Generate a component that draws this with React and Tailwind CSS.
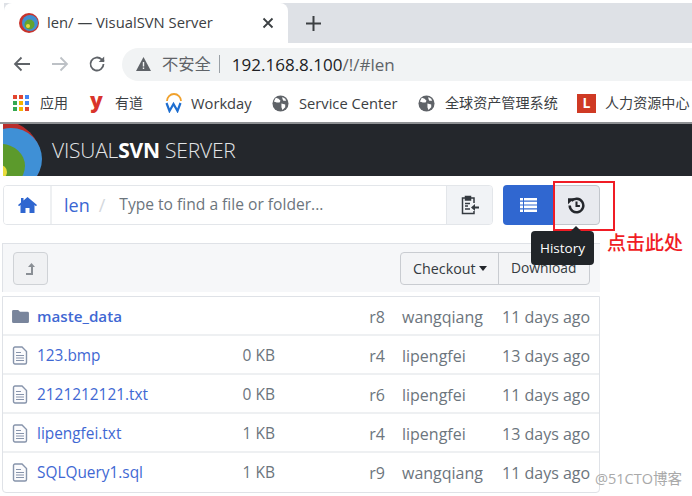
import React from "react";

const sans = { fontFamily: '"Open Sans","Noto Sans CJK SC",sans-serif' };

function Bm({ icon, label, className = "", gap = "gap-[10px]", text = "text-[14.7px]" }) {
  return (
    <div className={"flex items-center " + gap + " " + className}>
      {icon}
      <span className={text + " leading-none text-[#3c4043] whitespace-nowrap"}>{label}</span>
    </div>
  );
}

const Globe = () => (
  <svg width="17" height="17" viewBox="0 0 18 18" className="shrink-0">
    <circle cx="9" cy="9" r="8.5" fill="#5f6368" />
    <path d="M4 3l3 1 2 2-1 2-3 0-3-1zM10 9l4 1 0 3-3 3-1-3zM11 2l3 2 1 2-3 0-1-2z" fill="#fff" />
  </svg>
);

const FileIcon = () => (
  <svg width="16" height="19" viewBox="0 0 16 19" className="shrink-0" fill="none" stroke="#8794ab" strokeWidth="1.4">
    <path d="M1.5 2.5a1.5 1.5 0 0 1 1.5-1.5h7l4.5 4.5v11a1.5 1.5 0 0 1-1.5 1.5H3a1.5 1.5 0 0 1-1.5-1.5z" fill="#fbfbfd" />
    <path d="M4 6.5h5M4 9.5h8M4 12h8M4 14.5h8" strokeWidth="1.1" />
  </svg>
);

const FolderIcon = () => (
  <svg width="17" height="15" viewBox="0 0 18 16" className="shrink-0">
    <path d="M0 2.5A1.5 1.5 0 0 1 1.5 1h5l2 2h8A1.5 1.5 0 0 1 18 4.5v9a1.5 1.5 0 0 1-1.5 1.5h-15A1.5 1.5 0 0 1 0 13.500z" fill="#79859c" />
  </svg>
);

const rows = [
  ["folder", "maste_data", "", "r8", "wangqiang", "11 days ago"],
  ["file", "123.bmp", "0 KB", "r4", "lipengfei", "13 days ago"],
  ["file", "2121212121.txt", "0 KB", "r6", "lipengfei", "11 days ago"],
  ["file", "lipengfei.txt", "1 KB", "r4", "lipengfei", "13 days ago"],
  ["file", "SQLQuery1.sql", "1 KB", "r9", "wangqiang", "11 days ago"],
];

export default function App() {
  return (
    <div className="relative w-[692px] h-[496px] overflow-hidden bg-white" style={sans}>
      {/* tab strip */}
      <div className="mt-[3px] h-[40px] flex bg-[#dee1e6]">
        <div className="w-[4px] bg-white" />
        <div className="w-[284px] bg-white rounded-t-[8px] flex items-center pl-[15px] pr-[14px]">
          <svg width="20" height="20" viewBox="0 0 20 20" className="shrink-0">
            <circle cx="10" cy="10" r="10" fill="#c8332b" />
            <circle cx="11" cy="10" r="8" fill="#3f8fd0" />
            <circle cx="10.500" cy="11.500" r="5" fill="#63a22f" />
            <circle cx="9" cy="13" r="2" fill="#e8d93c" />
          </svg>
          <span className="ml-[8px] pb-[2px] text-[14.800px] text-[#3c4043] leading-none whitespace-nowrap">len/ — VisualSVN Server</span>
          <svg width="12" height="12" viewBox="0 0 12 12" className="ml-auto" stroke="#3c4043" strokeWidth="1.8">
            <path d="M1.500 1.500l9 9M10.500 1.500l-9 9" />
          </svg>
        </div>
        <div className="w-[50px] flex items-center justify-center">
          <svg width="15" height="15" viewBox="0 0 15 15" stroke="#3c4043" strokeWidth="2"><path d="M7.500 0v15M0 7.500h15" /></svg>
        </div>
      </div>

      {/* address bar */}
      <div className="h-[43px] flex items-center pl-[13px] pb-[1px]">
        <svg width="18" height="16" viewBox="0 0 18 16" fill="none" stroke="#5f6368" strokeWidth="1.8"><path d="M17 8H2M8.500 1.500L2 8l6.500 6.500" /></svg>
        <svg width="18" height="16" viewBox="0 0 18 16" fill="none" stroke="#bdc1c6" strokeWidth="1.8" className="ml-[20px]"><path d="M1 8h15M9.500 1.500L16 8l-6.500 6.500" /></svg>
        <svg width="18" height="18" viewBox="0 0 18 18" fill="none" stroke="#5f6368" strokeWidth="1.8" className="ml-[19px]">
          <path d="M15.500 9a6.500 6.500 0 1 1-1.900-4.600L16 6.500" />
          <path d="M16.200 1.500v5.500h-5.500" fill="#5f6368" stroke="none" />
        </svg>
        <div className="ml-[16px] flex-1 h-[33px] rounded-l-[17px] bg-[#f1f3f4] flex items-center pl-[14px]">
          <svg width="15" height="14" viewBox="0 0 15 14"><path d="M7.500 0L15 14H0z" fill="#5f6368" /><path d="M6.800 5h1.400v4.500H6.800zM6.800 10.500h1.400V12H6.800z" fill="#f1f3f4" /></svg>
          <span className="ml-[11px] text-[16.300px] leading-none text-[#5f6368]">不安全</span>
          <span className="ml-[8px] w-px h-[18px] bg-[#9aa0a6]" />
          <span className="ml-[12px] text-[17px] leading-none text-[#202124] whitespace-nowrap">
            192.168.8.100<span className="text-[#5f6368]">/!/#len</span>
          </span>
        </div>
      </div>

      {/* bookmarks */}
      <div className="h-[38px] flex items-center pl-[13px] pb-[2px] border-b-[2px] border-[#8f9194]">
        <Bm
          className="w-[77px]"
          gap="gap-[11px]"
          text="text-[14px]"
          label="应用"
          icon={
            <div className="grid grid-cols-3 gap-[2px] w-[16px] shrink-0">
              {["#e2452f", "#e2452f", "#4285f4", "#34a853", "#f4b400", "#4285f4", "#34a853", "#f4b400", "#e2452f"].map((c, i) => (
                <span key={i} className="w-[4px] h-[4px]" style={{ backgroundColor: c }} />
              ))}
            </div>
          }
        />
        <Bm
          className="w-[75px]"
          gap="gap-[12px]"
          text="text-[14px]"
          label="有道"
          icon={<span className="text-[21px] font-extrabold leading-none text-[#d9342b] w-[13px] -mt-[6px]">y</span>}
        />
        <Bm
          className="w-[107px]"
          label="Workday"
          gap="gap-[8px]"
          icon={
            <svg width="18" height="20" viewBox="0 0 18 20" fill="none" className="shrink-0">
              <path d="M2 8a7 7 0 0 1 14 0" stroke="#f0a12c" strokeWidth="1.800" />
              <path d="M1.500 10l3 8 4-7 4 7 3-8" stroke="#1e6ed0" strokeWidth="2.200" />
            </svg>
          }
        />
        <Bm className="w-[146px]" label="Service Center" icon={<Globe />} />
        <Bm className="w-[159px]" label="全球资产管理系统" text="text-[14.100px]" icon={<Globe />} />
        <Bm
          label="人力资源中心"
          gap="gap-[9px]"
          text="text-[14.100px]"
          icon={
            <span className="w-[19px] h-[19px] shrink-0 bg-[#cf3a24] text-white text-[14px] font-bold leading-none flex items-center justify-center">L</span>
          }
        />
      </div>

      {/* dark header */}
      <div className="h-[52px] ml-[3px] bg-[#24272c] flex items-center overflow-hidden relative">
        <svg width="40" height="52" viewBox="0 0 40 52" className="shrink-0">
          <circle cx="0" cy="35" r="38" fill="#b92d2b" />
          <circle cx="8" cy="35" r="31" fill="#3f90d6" />
          <ellipse cx="-2" cy="42" rx="24" ry="22" fill="#5c9a2c" />
          <circle cx="-3" cy="48" r="7" fill="#e8dc3c" />
        </svg>
        <span className="ml-[9px] text-[21px] tracking-[-0.2px] leading-none text-[#e3e5e7] whitespace-nowrap font-light">
          VISUAL<span className="font-bold text-white">SVN</span> SERVER
        </span>
      </div>

      {/* search row */}
      <div className="mt-[9px] ml-[3px] flex h-[40px]">
        <div className="w-[490px] flex border border-[#e3e6ea] rounded-[4px] overflow-hidden">
          <div className="w-[48px] flex items-center justify-center border-r-[2px] border-[#eef0f2] bg-white">
            <svg width="19" height="16" viewBox="0 0 19 16"><path d="M9.500 0L19 8l-1 1.300-1.500-1.200V16H11.500v-5h-4v5H2.500V8.100L1 9.300 0 8l3-2.500V1h2.500v2.400z" fill="#2f66d0" /></svg>
          </div>
          <div className="flex-1 flex items-center pl-[12px]">
            <span className="text-[18px] leading-none font-medium text-[#3a66d2]">len</span>
            <span className="ml-[9px] text-[18px] leading-none text-[#d4d8dd]">/</span>
            <span className="ml-[14px] text-[15.600px] leading-none text-[#6c757d] whitespace-nowrap">Type to find a file or folder...</span>
          </div>
          <div className="w-[46px] flex items-center justify-center border-l border-[#e3e6ea] bg-[#f1f3f6]">
            <svg width="18" height="20" viewBox="0 0 18 20" fill="none" stroke="#343a40" strokeWidth="1.500">
              <path d="M4.500 3H1.500v15.500h11.500V16M13 8V3h-3" />
              <path d="M4.500 1.500h5V5h-5z" fill="#343a40" />
              <path d="M4 8.500h5M4 11h3M4 14h5" strokeWidth="1.300" />
              <path d="M18 12.500h-5" strokeWidth="2" />
              <path d="M14 9l-4 3.500 4 3.500z" fill="#343a40" stroke="none" />
            </svg>
          </div>
        </div>
        <div className="ml-[10px] w-[50px] bg-[#3067d0] rounded-l-[4px] flex items-center justify-center">
          <svg width="17" height="14" viewBox="0 0 17 14" fill="#fff">
            <path d="M0 0h3v2.600H0zM4 0h13v2.600H4zM0 3.800h3v2.600H0zM4 3.800h13v2.600H4zM0 7.600h3v2.600H0zM4 7.600h13v2.600H4zM0 11.400h3V14H0zM4 11.400h13V14H4z" />
          </svg>
        </div>
        <div className="w-[47px] bg-[#e8eaef] border border-[#c2c6cc] rounded-r-[4px] flex items-center justify-center">
          <svg width="17" height="17" viewBox="0 0 15 15" fill="none" stroke="#24272c" strokeWidth="2.200">
            <path d="M3 3.500A6 6 0 1 1 1.500 7.500" />
            <path d="M0 1l5.500 0L0 6.500z" fill="#24272c" stroke="none" />
            <path d="M7.500 4v4h3" strokeWidth="1.800" />
          </svg>
        </div>
      </div>

      {/* toolbar panel */}
      <div className="mt-[18px] ml-[2px] w-[598px] h-[49px] bg-[#f6f7f9] border-t border-l border-[#dfe2e7] flex items-center pl-[10px] pr-[10px] pt-[1px]">
        <div className="w-[35px] h-[33px] rounded-[4px] border border-[#cfd2d6] bg-[#f0f1f3] flex items-center justify-center">
          <svg width="9" height="12" viewBox="0 0 9 12" fill="#8a8f95"><path d="M5.500 0L9 4H7v8H0v-2h5V4H2z" /></svg>
        </div>
        <div className="ml-auto flex h-[33px] border border-[#c9ccd1] rounded-[4px] bg-[#f3f4f6] text-[14px] font-medium text-[#343a40]">
          <div className="w-[98px] flex items-center pl-[12px] border-r border-[#c9ccd1]">
            <span className="text-[14.300px]">Checkout</span>
            <span className="ml-[3px] w-0 h-0 border-x-[4px] border-x-transparent border-t-[5px] border-t-[#24272c]" />
          </div>
          <div className="w-[90px] flex items-center pl-[12px] text-[13.800px]">Download</div>
        </div>
      </div>

      {/* table */}
      <div className="mt-[4px] ml-[2px] w-[598px] border border-[#dfe2e7] rounded-b-[4px] bg-white">
        {rows.map((r, i) => (
          <div
            key={r[1]}
            className={
              "flex items-center h-[39px] text-[16px] " +
              (i < rows.length - 1 ? "border-b-[2px] border-[#eef0f2] pt-[2px]" : "")
            }
          >
            <div className="w-[34px] pl-[9px] flex items-center shrink-0">
              {r[0] === "folder" ? <FolderIcon /> : <FileIcon />}
            </div>
            <span className={"w-[178px] leading-none text-[#3f68d3] whitespace-nowrap " + (i === 0 ? "font-semibold text-[15.200px]" : "text-[15.400px]")}>{r[1]}</span>
            <span className="w-[60px] text-right leading-none text-[15.500px] text-[#6c757d]">{r[2]}</span>
            <span className="w-[110px] text-right leading-none text-[#6c757d]">{r[3]}</span>
            <span className="ml-[17px] w-[100px] leading-none text-[#6c757d]">{r[4]}</span>
            <span className="leading-none whitespace-nowrap text-[#6c757d]">{r[5]}</span>
          </div>
        ))}
      </div>

      {/* overlays */}
      <div className="absolute left-[553px] top-[181px] w-[62px] h-[50px] border-[2px] border-[#f01c25]" />
      <div className="absolute left-[571px] top-[226px] w-0 h-0 border-x-[5px] border-x-transparent border-b-[5px] border-b-[#212529]" />
      <div className="absolute left-[531px] top-[231px] w-[63px] h-[34px] rounded-[4px] bg-[#212529] text-white text-[13.500px] flex items-center justify-center">History</div>
      <div className="absolute left-[607px] top-[232px] text-[19px] font-medium leading-[22px] text-[#f01c25] whitespace-nowrap">点击此处</div>
      <div className="absolute left-[595px] top-[472px] text-[14.500px] leading-none text-[#a9a9a9] whitespace-nowrap">@51CTO博客</div>
    </div>
  );
}
